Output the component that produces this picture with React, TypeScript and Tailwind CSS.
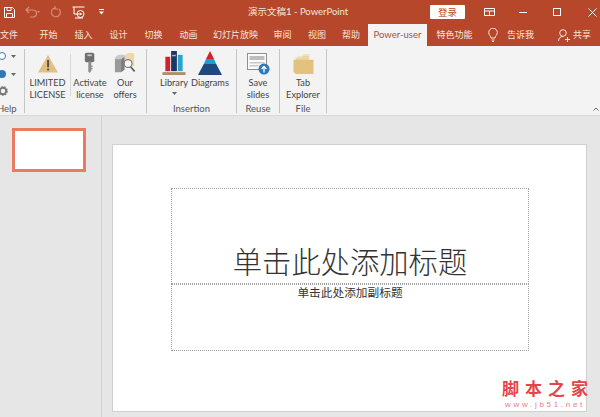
import React from "react";

const font = { fontFamily: 'Lato, "Noto Sans CJK SC", sans-serif' };
const cjk = { fontFamily: '"Noto Sans CJK SC", sans-serif' };

function Sep() {
  return <div className="w-px self-stretch mb-[2px] bg-[#c6c6c6] shrink-0" />;
}

function Big({ icon, l1, l2, w, extra }: { icon: React.ReactNode; l1: string; l2?: string; w: number; extra?: boolean }) {
  return (
    <div className="flex flex-col items-center shrink-0" style={{ width: w }}>
      <div className="h-[24px] mt-[2px] flex items-center justify-center">{icon}</div>
      <div className="mt-[2px] text-[9.2px] leading-[12px] text-[#444] text-center whitespace-nowrap">
        <div>{l1}</div>
        {l2 && <div>{l2}</div>}
        {extra && (
          <svg width="5" height="3" className="mx-auto mt-[3px]"><path d="M0 0h5L2.5 3z" fill="#666" /></svg>
        )}
      </div>
    </div>
  );
}

function Group({ children, label, w, pl = 0 }: { children: React.ReactNode; label: string; w: number; pl?: number }) {
  return (
    <div className="flex flex-col shrink-0 h-full" style={{ width: w }}>
      <div className="flex flex-1" style={{ paddingLeft: pl }}>{children}</div>
      <div className="text-[9.5px] leading-[12px] text-[#555] text-center">{label}</div>
    </div>
  );
}

const Warn = (
  <svg width="20" height="18" viewBox="0 0 22 20" className="mt-[2px]">
    <path d="M11 0 L22 19.5 H0 Z" fill="#e3bf82" />
    <rect x="10" y="5.5" width="2.2" height="8" fill="#5a5148" />
    <rect x="10" y="15" width="2.2" height="2.2" fill="#5a5148" />
  </svg>
);
const Key = (
  <svg width="12" height="22" viewBox="0 0 14 24">
    <rect x="1" y="0" width="11" height="11" rx="2" fill="#6f6f6f" />
    <rect x="4" y="2" width="5" height="2" fill="#c9c9c9" />
    <path d="M5 10h3.5v11L6.7 24 5 21.5z" fill="#8e8e8e" />
    <rect x="8" y="15" width="2" height="2" fill="#8e8e8e" />
    <rect x="8" y="18" width="2" height="1.5" fill="#8e8e8e" />
  </svg>
);
const Offers = (
  <svg width="22" height="21" viewBox="0 0 23 24">
    <path d="M11 3l4-3h7v15H11z" fill="#efd8a8" />
    <path d="M0 5l4-3h7v2L7 7H0z" fill="#c9c9c9" />
    <rect x="0" y="7" width="7" height="15" fill="#9a9a9a" />
    <path d="M7 7l4-3v15l-4 3z" fill="#7d7d7d" />
    <circle cx="15" cy="12" r="4.5" fill="#f7f7f7" stroke="#7b7b7b" strokeWidth="1.3" />
    <path d="M18 16l4.5 5" stroke="#555" strokeWidth="1.8" />
  </svg>
);
const Library = (
  <svg width="24" height="24" viewBox="0 0 24 25">
    <rect x="3" y="6" width="5" height="15" fill="#d3202c" />
    <rect x="9" y="0" width="6" height="21" fill="#1c3763" />
    <rect x="10" y="4" width="4" height="1.5" fill="#9fb3cf" />
    <rect x="16" y="4" width="5" height="17" fill="#26a5cf" />
    <rect x="0" y="22" width="24" height="3" fill="#b48c68" />
  </svg>
);
const Pyramid = (
  <svg width="24" height="24" viewBox="0 0 24 24">
    <path d="M12 0 L16 8 H8 Z" fill="#d81f2c" />
    <path d="M8 8 H16 L18.2 13 H5.8 Z" fill="#1d9bd7" />
    <path d="M5.8 13 H18.2 L24 24 H0 Z" fill="#1c4a80" />
  </svg>
);
const Save = (
  <svg width="23" height="22" viewBox="0 0 23 22" className="mt-[2px]">
    <rect x="0.5" y="0.5" width="19" height="16" fill="#fafafa" stroke="#8f8f8f" />
    <rect x="2.5" y="3" width="15" height="4" fill="#bdbdbd" />
    <rect x="2.5" y="9" width="15" height="1.5" fill="#c9c9c9" />
    <rect x="2.5" y="12" width="9" height="1.5" fill="#c9c9c9" />
    <circle cx="17" cy="16" r="5.5" fill="#2f79b9" />
    <path d="M17 19.5v-5M14.6 16l2.4-2.6 2.4 2.6" stroke="#fff" strokeWidth="1.3" fill="none" />
  </svg>
);
const Folder = (
  <svg width="21" height="20" viewBox="0 0 21 21" className="mt-[2px]">
    <path d="M4 2h5l2-2h6v5H4z" fill="#f1e2c4" />
    <path d="M2 4h6l2-2h6v5H2z" fill="#ecd6a6" />
    <path d="M0 6h21v15H2.5L0 19z" fill="#e3c27f" />
  </svg>
);

function Tab({ children, w }: { children: React.ReactNode; w: number }) {
  return (
    <div className="text-center text-[9px] text-[#f7e4dd] shrink-0 whitespace-nowrap" style={{ width: w, ...cjk }}>
      {children}
    </div>
  );
}

export default function App() {
  return (
    <div className="relative w-[600px] h-[417px] overflow-hidden bg-[#e6e6e6] flex flex-col" style={font}>
      {/* Title bar */}
      <div className="h-[24px] bg-[#b7472a] flex items-center text-[#f7e4dd] shrink-0">
        <svg width="11" height="11" viewBox="0 0 11 11" className="ml-[4px]">
          <path d="M0.5 0.5h8l2 2v8h-10z M3 0.5v3h4v-3 M2.5 10.5v-4h6v4" fill="none" stroke="#fff" strokeWidth="1" />
        </svg>
        <svg width="16" height="12" viewBox="0 0 16 12" className="ml-[10px]">
          <path d="M1 4h7a3.5 3.5 0 0 1 0 7H5 M4 1L1 4l3 3" fill="none" stroke="#d98d77" strokeWidth="1.2" />
          <path d="M12 5h3l-1.5 2z" fill="#d98d77" />
        </svg>
        <svg width="11" height="12" viewBox="0 0 11 12" className="ml-[10px]">
          <path d="M8 3a4.5 4.5 0 1 1-4-1.2 M4 0v3h3" fill="none" stroke="#d98d77" strokeWidth="1.2" />
        </svg>
        <svg width="14" height="13" viewBox="0 0 14 13" className="ml-[10px]">
          <path d="M0.5 1h12 M2 1v7h5" fill="none" stroke="#fff" strokeWidth="1" />
          <circle cx="8.5" cy="8" r="3.5" fill="none" stroke="#fff" />
          <path d="M7.5 6.5l3 1.5-3 1.5z" fill="#fff" />
          <path d="M3 12h8" stroke="#fff" />
        </svg>
        <svg width="5" height="6" viewBox="0 0 5 6" className="ml-[13px]">
          <path d="M0 0h5v1H0z M0 2.5h5L2.5 5.5z" fill="#fff" />
        </svg>
        <div className="ml-[144px] w-[142px] text-[9.5px] whitespace-nowrap shrink-0">演示文稿1 - PowerPoint</div>
        <div className="ml-[40px] w-[35px] h-[14px] bg-white rounded-[1px] text-[#b7472a] text-[9.5px] leading-[14px] text-center shrink-0" style={cjk}>登录</div>
        <svg width="11" height="9" viewBox="0 0 11 9" className="ml-[19px]">
          <path d="M0.5 0.5h10v7h-10z M0.5 3h10 M5.5 3v5" fill="none" stroke="#fff" />
        </svg>
        <div className="ml-[24px] w-[8px] h-px bg-white" />
        <div className="ml-[26px] w-[8px] h-[8px] border border-white" />
        <svg width="9" height="9" viewBox="0 0 9 9" className="ml-[27px]">
          <path d="M0.5 0.5l8 8M8.5 0.5l-8 8" stroke="#fff" />
        </svg>
      </div>

      {/* Tabs */}
      <div className="h-[22px] bg-[#b7472a] flex items-center shrink-0">
        <Tab w={18}>文件</Tab>
        <div className="w-[13px] shrink-0" />
        <Tab w={35}>开始</Tab>
        <Tab w={35}>插入</Tab>
        <Tab w={35}>设计</Tab>
        <Tab w={35}>切换</Tab>
        <Tab w={35}>动画</Tab>
        <Tab w={59}>幻灯片放映</Tab>
        <Tab w={35}>审阅</Tab>
        <Tab w={34}>视图</Tab>
        <Tab w={34}>帮助</Tab>
        <div className="w-[59px] h-[22px] bg-[#f3f3f3] text-[#a5543e] text-[9.5px] leading-[22px] text-center shrink-0">Power-user</div>
        <Tab w={55}>特色功能</Tab>
        <svg width="10" height="14" viewBox="0 0 10 14" className="ml-[6px] shrink-0">
          <path d="M3 10C3 8 .7 7 .7 4.5a4.3 4.3 0 0 1 8.6 0C9.3 7 7 8 7 10z M3.5 12h3 M4 13.5h2" fill="none" stroke="#f7e4dd" />
        </svg>
        <div className="ml-[9px] text-[9px] text-[#f7e4dd] whitespace-nowrap shrink-0" style={cjk}>告诉我</div>
        <svg width="12" height="13" viewBox="0 0 12 13" className="ml-[24px] shrink-0">
          <circle cx="5" cy="4" r="3.3" fill="none" stroke="#f7e4dd" />
          <path d="M0.5 12c0-3 2-4.5 4.5-4.5 M7 10.5h5 M9.5 8v5" fill="none" stroke="#f7e4dd" />
        </svg>
        <div className="ml-[3px] text-[9px] text-[#f7e4dd] whitespace-nowrap shrink-0" style={cjk}>共享</div>
      </div>

      {/* Ribbon */}
      <div className="relative h-[70px] bg-[#f3f3f3] border-b border-[#d9d9d9] flex pt-[3px] shrink-0">
        <div className="w-[24px] shrink-0 flex flex-col h-full overflow-hidden">
          <div className="flex-1">
            <div className="flex items-center gap-[5px] h-[14px]">
              <span className="w-[8px] h-[8px] -ml-[2px] rounded-full border border-[#2f79b9] bg-white" />
              <svg width="5" height="3"><path d="M0 0h5L2.5 3z" fill="#666" /></svg>
            </div>
            <div className="flex items-center gap-[5px] mt-[4px] h-[14px]">
              <span className="w-[8px] h-[8px] -ml-[2px] rounded-full bg-[#2f79b9]" />
              <svg width="5" height="3"><path d="M0 0h5L2.5 3z" fill="#666" /></svg>
            </div>
            <svg width="10" height="10" viewBox="0 0 10 10" className="-ml-[2px] mt-[5px]">
              <circle cx="5" cy="5" r="3.2" fill="none" stroke="#7a7a7a" strokeWidth="2" />
              <circle cx="5" cy="5" r="4.3" fill="none" stroke="#7a7a7a" strokeWidth="1.2" strokeDasharray="1.5 1.5" />
            </svg>
          </div>
          <div className="text-[9.5px] leading-[12px] text-[#555] -ml-[3px]">Help</div>
        </div>
        <Sep />
        <Big icon={Warn} l1="LIMITED" l2="LICENSE" w={45} />
        <div className="w-px h-[42px] mt-[5px] bg-[#d9d9d9] shrink-0" />
        <Group label="" w={75}>
          <Big icon={Key} l1="Activate" l2="license" w={38} />
          <Big icon={Offers} l1="Our" l2="offers" w={32} />
        </Group>
        <Sep />
        <Group label="Insertion" w={89} pl={8}>
          <Big icon={Library} l1="Library" w={38} extra />
          <Big icon={Pyramid} l1="Diagrams" w={34} />
        </Group>
        <Sep />
        <Group label="Reuse" w={42}>
          <Big icon={Save} l1="Save" l2="slides" w={42} />
        </Group>
        <Sep />
        <Group label="File" w={46}>
          <Big icon={Folder} l1="Tab" l2="Explorer" w={46} />
        </Group>
        <Sep />
        <svg width="6" height="4" viewBox="0 0 6 4" className="absolute right-[1px] bottom-[4px]">
          <path d="M0.5 3.5L3 1l2.5 2.5" fill="none" stroke="#666" />
        </svg>
      </div>

      {/* Workspace */}
      <div className="flex flex-1 min-h-0">
        <div className="w-[102px] shrink-0 pt-[12px] pl-[12px] border-r border-[#d2d2d2]">
          <div className="w-[74px] h-[44px] bg-white border-[3px] border-[#ea7b62]" />
        </div>
        <div className="flex-1 pl-[10px] pt-[28px]">
          <div className="relative w-[475px] h-[268px] bg-white border border-[#d0d0d0] pt-[43px] pl-[58px]">
            <div className="w-[358px] h-[96px] border border-dotted border-[#a0a0a0] flex items-end justify-center pb-[4px]">
              <div className="text-[29.3px] leading-[38px] text-[#333] whitespace-nowrap" style={{ ...cjk, fontWeight: 300 }}>单击此处添加标题</div>
            </div>
            <div className="w-[358px] h-[67px] border border-dotted border-[#a0a0a0] text-center text-[11.7px] leading-[14px] text-[#333]" style={cjk}>
              单击此处添加副标题
            </div>
          </div>
        </div>
      </div>

      {/* Watermark */}
      <div className="absolute left-[502px] top-[376px]">
        <div className="text-[17px] leading-[24px] text-[#e8434c] tracking-[6px] whitespace-nowrap font-bold" style={cjk}>脚本之家</div>
        <div className="ml-[3px] text-[8px] leading-[10px] text-[#e0828a] tracking-[2.7px] whitespace-nowrap" style={{ fontFamily: '"Liberation Sans", sans-serif' }}>www.jb51.net</div>
      </div>
    </div>
  );
}
